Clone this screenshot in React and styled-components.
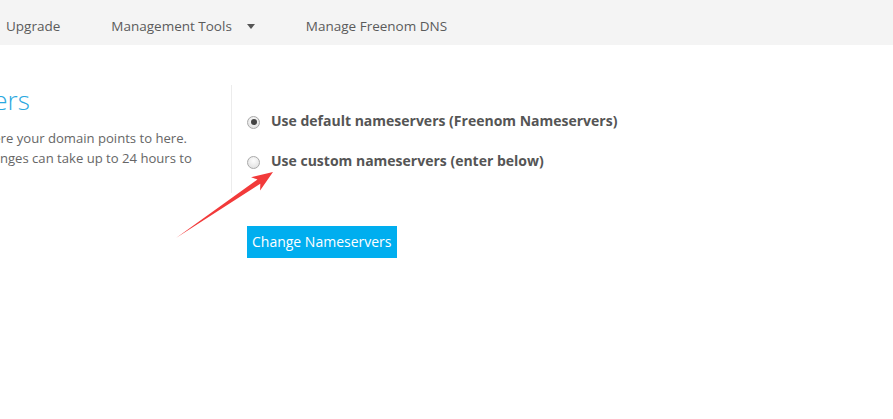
import React from 'react'
import styled, { createGlobalStyle } from 'styled-components'

const GlobalStyle = createGlobalStyle`
  html, body {
    margin: 0;
    padding: 0;
    background: #fff;
    font-family: "Open Sans", "Liberation Sans", sans-serif;
    overflow: hidden;
  }
`

const Page = styled.div`
  position: relative;
  width: 893px;
  height: 419px;
  overflow: hidden;
`

const NavBar = styled.nav`
  height: 45px;
  box-sizing: border-box;
  background: #f4f4f4;
  display: flex;
  align-items: flex-start;
  padding: 16px 0 0 6px;
  gap: 51px;
`

const NavItem = styled.div`
  display: flex;
  align-items: center;
  font-size: 13.5px;
  line-height: 20px;
  color: #5b5b5b;
  white-space: nowrap;
`

const Caret = styled.span`
  width: 0;
  height: 0;
  margin-left: 15px;
  border-left: 4px solid transparent;
  border-right: 4px solid transparent;
  border-top: 5px solid #555;
`

const Main = styled.div`
  display: flex;
  align-items: flex-start;
  padding-top: 40px;
`

const InfoCol = styled.div`
  width: 231px;
  flex: none;
  overflow: hidden;
  border-right: 1px solid #ececec;
  padding-bottom: 5px;
`

const Shift = styled.div`
  margin-left: ${props => props.offset}px;
  white-space: nowrap;
`

const Title = styled.h2`
  margin: 0 0 0 -1px;
  font-size: 26px;
  font-weight: 300;
  line-height: 30px;
  color: #29a8e0;
`

const Text = styled.p`
  margin: 13px 0 0;
  font-size: 13.1px;
  line-height: 20px;
  color: #666;
`

const FormCol = styled.div`
  padding: 25px 0 0 15px;
  display: flex;
  flex-direction: column;
  align-items: flex-start;
`

const Option = styled.label`
  display: flex;
  align-items: center;
  height: 20px;
  margin-bottom: ${props => props.gap}px;
  font-size: 14px;
  font-weight: 700;
  color: #555;
  white-space: nowrap;
`

const Radio = styled.input.attrs({ type: 'radio' })`
  appearance: none;
  margin: 4px 11px 0 0;
  width: 13px;
  height: 13px;
  border-radius: 50%;
  border: 1px solid #a9a9a9;
  box-sizing: border-box;
  background: radial-gradient(circle at 50% 35%, #fdfdfd 0%, #dcdcdc 100%);
  position: relative;
  &:checked::after {
    content: '';
    position: absolute;
    left: 2.5px;
    top: 2.5px;
    width: 6px;
    height: 6px;
    border-radius: 50%;
    background: #444;
  }
`

const Button = styled.button`
  height: 32px;
  padding: 0 5px;
  border: 0;
  border-radius: 0;
  background: #00aeef;
  color: #fff;
  font-family: inherit;
  font-size: 14px;
  line-height: 32px;
`

const Overlay = styled.svg`
  position: absolute;
  left: 0;
  top: 0;
  pointer-events: none;
`

export default function App() {
  return (
    <Page>
      <GlobalStyle />
      <NavBar>
        <NavItem>Upgrade</NavItem>
        <NavItem>Management Tools<Caret /></NavItem>
        <NavItem>Manage Freenom DNS</NavItem>
      </NavBar>
      <Main>
        <InfoCol>
          <Shift offset={-124}>
            <Title>Nameservers</Title>
            <Text>
              You can change where your domain points to here.<br />
              Please be aware changes can take up to 24 hours to<br />
              propagate.
            </Text>
          </Shift>
        </InfoCol>
        <FormCol>
          <Option gap={20}>
            <Radio name="ns" defaultChecked />
            Use default nameservers (Freenom Nameservers)
          </Option>
          <Option gap={56}>
            <Radio name="ns" />
            Use custom nameservers (enter below)
          </Option>
          <Button>Change Nameservers</Button>
        </FormCol>
      </Main>
      <Overlay width="893" height="419">
        <polygon
          points="176,238 260.3,183.7 260.1,190.5 273,172 251.1,177.3 257.5,179.5"
          fill="#f23a3a"
        />
      </Overlay>
    </Page>
  )
}
